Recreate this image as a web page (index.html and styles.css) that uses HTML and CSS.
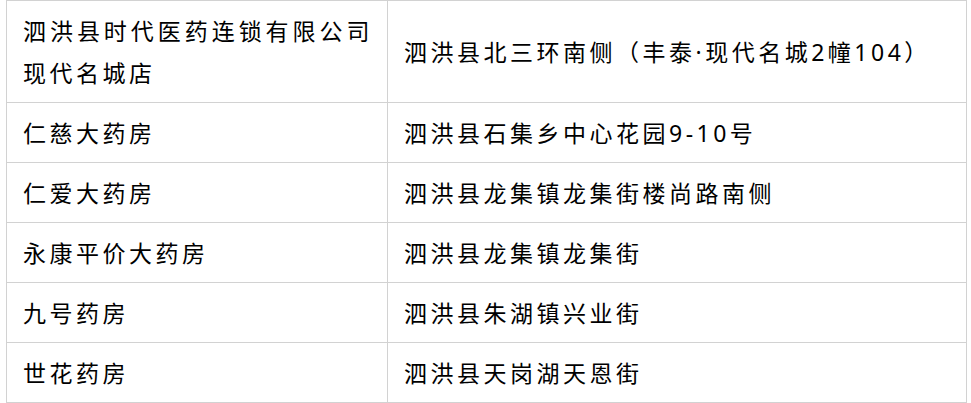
FILE: index.html
```html
<!DOCTYPE html>
<html lang="zh-CN">
<head>
<meta charset="utf-8">
<title>药房列表</title>
<link rel="stylesheet" href="styles.css">
</head>
<body>
<table class="shops">
  <colgroup>
    <col class="col-name">
    <col class="col-addr">
  </colgroup>
  <tbody>
    <tr>
      <td class="justify">泗洪县时代医药连锁有限公司现代名城店</td>
      <td>泗洪县北三环南侧（丰泰·现代名城2幢104）</td>
    </tr>
    <tr>
      <td>仁慈大药房</td>
      <td>泗洪县石集乡中心花园9-10号</td>
    </tr>
    <tr>
      <td>仁爱大药房</td>
      <td>泗洪县龙集镇龙集街楼尚路南侧</td>
    </tr>
    <tr>
      <td>永康平价大药房</td>
      <td>泗洪县龙集镇龙集街</td>
    </tr>
    <tr>
      <td>九号药房</td>
      <td>泗洪县朱湖镇兴业街</td>
    </tr>
    <tr>
      <td>世花药房</td>
      <td>泗洪县天岗湖天恩街</td>
    </tr>
  </tbody>
</table>
</body>
</html>
```

FILE: styles.css
```css
html, body {
  margin: 0;
  padding: 0;
  background: #ffffff;
}

body {
  padding: 0 5px 0 6px;
  font-family: "Noto Sans", "Noto Sans CJK SC", sans-serif;
  color: #000000;
}

.shops {
  width: 960px;
  border-collapse: collapse;
  table-layout: fixed;
}

.col-name {
  width: 381px;
}

.col-addr {
  width: 579px;
}

.shops td {
  border: 1px solid #d2d2d2;
  padding: 9px 12px 8px 16px;
  font-size: 23px;
  line-height: 42px;
  letter-spacing: 3.5px;
  vertical-align: middle;
  word-break: break-all;
}

.shops td.justify {
  text-align: justify;
  padding-right: 14px;
}
```
